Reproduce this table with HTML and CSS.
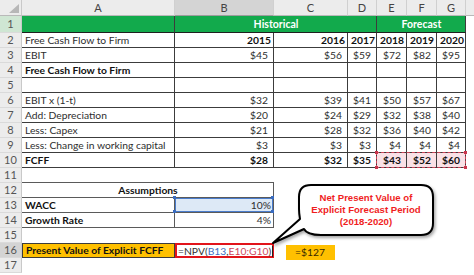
FILE: index.html
```html
<!DOCTYPE html>
<html>
<head>
<meta charset="utf-8">
<link rel="stylesheet" href="styles.css">
</head>
<body>
<div class="sheet">
  <!-- header row -->
  <div class="corner"><span class="tri"></span></div>
  <div class="ch">A</div>
  <div class="ch sel">B</div>
  <div class="ch">C</div>
  <div class="ch">D</div>
  <div class="ch">E</div>
  <div class="ch">F</div>
  <div class="ch">G</div>
  <div class="ch blank"></div>

  <!-- row 1 -->
  <div class="rh green">1</div>
  <div class="c g1 bd"></div>
  <div class="c g1 bd hist span3">Historical</div>
  <div class="c g1 bd hist span3">Forecast</div>
  <div class="c"></div>

  <!-- row 2 -->
  <div class="rh">2</div>
  <div class="c bd">Free Cash Flow to Firm</div>
  <div class="c bd b r yr">2015</div>
  <div class="c bd b r yr">2016</div>
  <div class="c bd b r yr">2017</div>
  <div class="c bd b r yr">2018</div>
  <div class="c bd b r yr">2019</div>
  <div class="c bd b r yr">2020</div>
  <div class="c"></div>

  <!-- row 3 -->
  <div class="rh">3</div>
  <div class="c bd">EBIT</div>
  <div class="c bd r">$45</div>
  <div class="c bd r">$56</div>
  <div class="c bd r">$59</div>
  <div class="c bd r">$72</div>
  <div class="c bd r">$82</div>
  <div class="c bd r">$95</div>
  <div class="c"></div>

  <!-- row 4 -->
  <div class="rh">4</div>
  <div class="c bd b">Free Cash Flow to Firm</div>
  <div class="c bd"></div>
  <div class="c bd"></div>
  <div class="c bd"></div>
  <div class="c bd"></div>
  <div class="c bd"></div>
  <div class="c bd"></div>
  <div class="c"></div>

  <!-- row 5 -->
  <div class="rh">5</div>
  <div class="c bd"></div>
  <div class="c bd"></div>
  <div class="c bd"></div>
  <div class="c bd"></div>
  <div class="c bd"></div>
  <div class="c bd"></div>
  <div class="c bd"></div>
  <div class="c"></div>

  <!-- row 6 -->
  <div class="rh">6</div>
  <div class="c bd">EBIT x (1-t)</div>
  <div class="c bd r">$32</div>
  <div class="c bd r">$39</div>
  <div class="c bd r">$41</div>
  <div class="c bd r">$50</div>
  <div class="c bd r">$57</div>
  <div class="c bd r">$67</div>
  <div class="c"></div>

  <!-- row 7 -->
  <div class="rh">7</div>
  <div class="c bd">Add: Depreciation</div>
  <div class="c bd r">$20</div>
  <div class="c bd r">$24</div>
  <div class="c bd r">$29</div>
  <div class="c bd r">$32</div>
  <div class="c bd r">$38</div>
  <div class="c bd r">$40</div>
  <div class="c"></div>

  <!-- row 8 -->
  <div class="rh">8</div>
  <div class="c bd">Less: Capex</div>
  <div class="c bd r">$21</div>
  <div class="c bd r">$28</div>
  <div class="c bd r">$32</div>
  <div class="c bd r">$36</div>
  <div class="c bd r">$40</div>
  <div class="c bd r">$42</div>
  <div class="c"></div>

  <!-- row 9 -->
  <div class="rh">9</div>
  <div class="c bd">Less: Change in working capital</div>
  <div class="c bd r">$3</div>
  <div class="c bd r">$3</div>
  <div class="c bd r">$3</div>
  <div class="c bd r">$4</div>
  <div class="c bd r">$4</div>
  <div class="c bd r">$4</div>
  <div class="c"></div>

  <!-- row 10 -->
  <div class="rh">10</div>
  <div class="c bd b">FCFF</div>
  <div class="c bd b r">$28</div>
  <div class="c bd b r">$32</div>
  <div class="c bd b r">$35</div>
  <div class="refrange">
    <div class="c bd b r pink">$43</div>
    <div class="c bd b r pink">$52</div>
    <div class="c bd b r pink">$60</div>
    <i class="k k1"></i><i class="k k2"></i><i class="k k3"></i><i class="k k4"></i>
  </div>
  <div class="c"></div>

  <!-- row 11 -->
  <div class="rh">11</div>
  <div class="c span8"></div>

  <!-- row 12 -->
  <div class="rh">12</div>
  <div class="c b ab-top center span2">Assumptions</div>
  <div class="c span6"></div>

  <!-- row 13 -->
  <div class="rh">13</div>
  <div class="c b ab">WACC</div>
  <div class="c r ab yr blue">10%<i class="k k1"></i><i class="k k2"></i><i class="k k3"></i><i class="k k4"></i></div>
  <div class="c span6"></div>

  <!-- row 14 -->
  <div class="rh">14</div>
  <div class="c b ab">Growth Rate</div>
  <div class="c r ab yr">4%</div>
  <div class="c span6"></div>

  <!-- row 15 -->
  <div class="rh">15</div>
  <div class="c span8"></div>

  <!-- row 16 -->
  <div class="rh sel">16</div>
  <div class="c b orange">Present Value of Explicit FCFF</div>
  <div class="c formula">=NPV(<span class="fb">B13</span>,<span class="fr">E10:G10</span>)<span class="caret"></span></div>
  <div class="c"><span class="result">=$127</span></div>
  <div class="c span5"></div>

  <!-- row 17 -->
  <div class="rh">17</div>
  <div class="c span8"></div>

  <div class="callout">
    <svg class="bubble" width="170" height="70" viewBox="0 0 170 70">
      <defs>
        <filter id="sh" x="-10%" y="-10%" width="130%" height="140%">
          <feDropShadow dx="1.5" dy="2" stdDeviation="1.5" flood-color="#000" flood-opacity="0.35"/>
        </filter>
      </defs>
      <path filter="url(#sh)" d="M40 2 H150 Q162 2 162 14 V40 Q162 52 150 52 H50 Q36 52 33 46 L2 60 L29 36 Q28 30 28 26 V14 Q28 2 40 2 Z" fill="#fff" stroke="#000" stroke-width="2" stroke-linejoin="round"/>
    </svg>
    <div class="ctext">Net Present Value of<br>Explicit Forecast Period<br>(2018-2020)</div>
  </div>
</div>
</body>
</html>
```
FILE: styles.css
```css
* { box-sizing: border-box; }
html, body { margin: 0; padding: 0; background: #fff; overflow: hidden; }
body { width: 474px; height: 275px; }

.sheet {
  position: relative;
  display: grid;
  grid-template-columns: 22px 153px 99px 74px 29px 30px 30px 29px 8px;
  grid-template-rows: 16px 17px repeat(16, 15px);
  font-family: Lato, "Open Sans", sans-serif;
  font-size: 10.3px;
  color: #2e2e2e;
}

.corner {
  position: relative;
  background: #ececec;
  border-right: 1px solid #c9c9c9;
  border-bottom: 1px solid #b9b9b9;
}
.tri {
  position: absolute;
  right: 2px;
  bottom: 2px;
  width: 0; height: 0;
  border-left: 10px solid transparent;
  border-bottom: 9px solid #b7b7b7;
}
.ch {
  background: #ececec;
  color: #444;
  font-size: 11px;
  text-align: center;
  line-height: 15px;
  border-right: 1px solid #d0d0d0;
  border-bottom: 1px solid #b9b9b9;
}
.ch.sel { background: #d4d4d4; border-bottom-color: #9c9c9c; }
.ch.blank { border-right: none; }

.rh {
  background: #ececec;
  color: #555;
  font-size: 11px;
  text-align: center;
  line-height: 14px;
  border-right: 1px solid #c9c9c9;
  border-bottom: 1px solid #dadada;
}
.rh.green { background: #cfe6d3; line-height: 16px; }
.rh.sel { background: #d4d4d4; }

.c {
  position: relative;
  padding: 0 2px 0 3px;
  line-height: 14px;
  white-space: nowrap;
  overflow: visible;
}
.bd { border-right: 1px solid #3c3c3c; border-bottom: 1px solid #3c3c3c; }
.b { font-weight: 700; color: #111; }
.r { text-align: right; padding-right: 5px; }
.r.yr { padding-right: 2px; }
.center { text-align: center; }

.g1 { background: #12aa4c; border-bottom: 1px solid #1f1f1f; }
.hist { color: #fff; font-weight: 700; text-align: center; line-height: 16px; font-size: 10.5px; }
.span2 { grid-column: span 2; }
.span3 { grid-column: span 3; }
.span5 { grid-column: span 5; }
.span6 { grid-column: span 6; }
.span8 { grid-column: span 8; }

.pink { background: #f9e1e6; }
.refrange {
  grid-column: span 3;
  position: relative;
  display: grid;
  grid-template-columns: 30px 30px 29px;
}
.refrange::after {
  content: "";
  position: absolute;
  left: -1px; top: -1px; right: 0; bottom: 0;
  border: 1px dashed #d0455a;
  pointer-events: none;
}
.k {
  position: absolute;
  width: 3px; height: 3px;
  background: #c9364d;
  z-index: 2;
}
.k1 { left: -2px; top: -2px; }
.k2 { right: -1px; top: -2px; }
.k3 { left: -2px; bottom: -1px; }
.k4 { right: -1px; bottom: -1px; }

.ab-top { border-top: 1px solid #5a5a5a; border-right: 1px solid #5a5a5a; border-bottom: 1px solid #5a5a5a; margin-top: -1px; line-height: 14px; }
.ab { border-right: 1px solid #5a5a5a; border-bottom: 1px solid #5a5a5a; }
.blue {
  background: #dde9f6;
  box-shadow: inset 0 0 0 1px #4a7ccc;
}
.blue .k { background: #3a6cc0; }

.orange { background: #ffc000; border: 1px solid #3c3c3c; color: #111; line-height: 13px; }
.formula {
  border: 2px solid #e2141b;
  line-height: 12px;
  padding-left: 1px;
  color: #333;
}
.fb { color: #3d6fc4; }
.fr { color: #d0455a; }
.caret {
  display: inline-block;
  width: 1px;
  height: 11px;
  background: #222;
  vertical-align: -2px;
  margin-left: 1px;
}
.result {
  display: block;
  margin: 2px 0 0 9px;
  width: 49px;
  height: 15px;
  background: #ffc000;
  padding-left: 9px;
  line-height: 15px;
  color: #3a2a00;
}

.callout {
  position: absolute;
  left: 271px;
  top: 183px;
  width: 170px;
  height: 70px;
  z-index: 5;
}
.bubble { position: absolute; left: 0; top: 0; }
.ctext {
  position: absolute;
  left: 28px;
  top: 2px;
  width: 134px;
  height: 50px;
  display: flex;
  align-items: center;
  justify-content: center;
  text-align: center;
  font-family: "Liberation Sans", Arial, sans-serif;
  font-weight: 700;
  font-size: 9.6px;
  line-height: 12px;
  color: #f01e1e;
}
```
